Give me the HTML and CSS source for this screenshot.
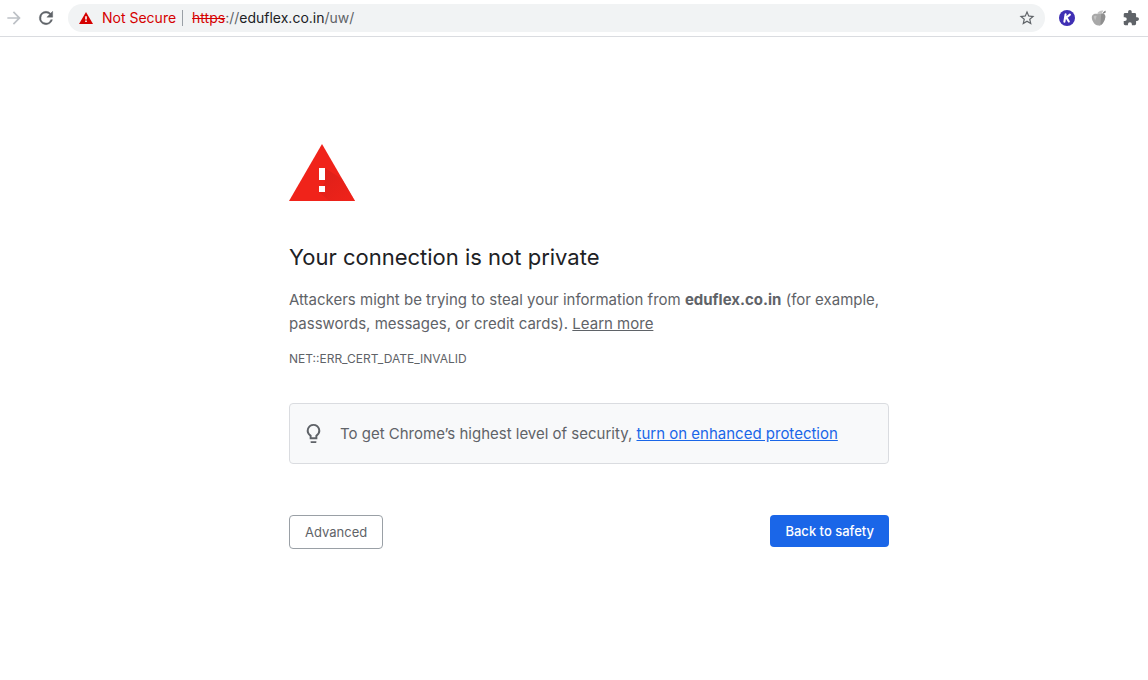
FILE: index.html
```html
<!DOCTYPE html>
<html lang="en">
<head>
  <meta charset="utf-8">
  <title>Privacy error</title>
  <link rel="stylesheet" href="styles.css">
</head>
<body>

  <header class="toolbar">
    <button class="nav-button forward" aria-label="Forward" disabled>
      <svg viewBox="0 0 24 24"><path d="M12 4l-1.41 1.41L16.17 11H4v2h12.17l-5.58 5.59L12 20l8-8z"/></svg>
    </button>
    <button class="nav-button" aria-label="Reload">
      <svg viewBox="0 0 24 24"><path d="M17.65 6.35A7.96 7.96 0 0 0 12 4a8 8 0 1 0 7.73 10h-2.08A6 6 0 1 1 12 6c1.66 0 3.14.69 4.22 1.78L13 11h7V4z" stroke="currentColor" stroke-width=".5"/></svg>
    </button>

    <div class="address-bar">
      <button class="security">
        <svg viewBox="0 0 14 12"><path class="triangle" d="M7 0l7 12H0z"/><path class="mark" d="M6.2 4.200h1.600v3.300H6.200zM6.200 8.600h1.600v1.500H6.200z"/></svg>
        Not Secure
      </button>
      <div class="url"><s>https</s>://<span class="host">eduflex.co.in</span>/uw/</div>
      <button class="star" aria-label="Bookmark this page">
        <svg viewBox="0 0 24 24"><path d="M22 9.24l-7.19-.62L12 2 9.19 8.63 2 9.24l5.46 4.73L5.82 21 12 17.27 18.18 21l-1.63-7.03zM12 15.4l-3.76 2.27 1-4.28-3.32-2.88 4.38-.38L12 6.1l1.71 4.04 4.38.38-3.32 2.88 1 4.28z"/></svg>
      </button>
    </div>

    <div class="extensions">
      <button aria-label="K extension">
        <svg viewBox="0 0 16 16">
          <circle cx="8" cy="8" r="8" fill="#3f2fb4"/>
          <path d="M6.6 4.4L5.4 11.6M10.9 4.6L6.5 8.3M7.6 7.7l2.2 3.8" fill="none" stroke="#fff" stroke-width="2.1" stroke-linecap="round"/>
        </svg>
      </button>
      <button aria-label="Fruit extension">
        <svg viewBox="0 0 16 16">
          <path d="M1 6C2 3.800 4.500 3.600 6.500 4 9 2.800 12.800 2.600 14 5c.9 2.400-.2 5.800-2.100 8.200-1.400 1.900-2.800 2.800-4.400 2.400-2.200-.2-4.400-1.300-5.500-4C1 9.800.5 7.500 1 6z" fill="#a8a8a8"/>
          <path d="M10.200 4c2.200-.8 3.900.1 4.100 2.100.1 2.700-1.200 5.700-3.200 7.800-1.100 1-1.700.7-1.600-.5z" fill="#8f8f8f"/>
          <path d="M6.200 4.200C6.700 1.800 9 .4 12.200.6c-.4 2.400-2.600 3.800-6 3.600z" fill="#c4c4c4"/>
          <path d="M12 2.400L14.300.5l.6 1.700-2.600 1.700z" fill="#808080"/>
          <path d="M2.600 6.700c.8-1.100 2.100-1 3-.5L4.200 10.500z" fill="#c2c2c2"/>
        </svg>
      </button>
      <button aria-label="Extensions">
        <svg viewBox="1 1 22 22"><path d="M20.500 11H19V7a2 2 0 0 0-2-2h-4V3.500a2.500 2.500 0 0 0-5 0V5H4a2 2 0 0 0-1.990 2v3.800H3.500a2.700 2.700 0 0 1 0 5.400H2V20a2 2 0 0 0 2 2h3.800v-1.500a2.700 2.700 0 0 1 5.400 0V22H17a2 2 0 0 0 2-2v-4h1.500a2.500 2.500 0 0 0 0-5z"/></svg>
      </button>
    </div>
  </header>

  <main class="page">
    <div class="interstitial">
      <svg class="warning" viewBox="0 0 66 57">
        <defs>
          <linearGradient id="shade" x1="0" y1="0" x2="1" y2="1">
            <stop offset="0" stop-color="#cf1d18"/>
            <stop offset="1" stop-color="#f0231a"/>
          </linearGradient>
        </defs>
        <path d="M33 0l33 57H0z" fill="#f0231a"/>
        <path d="M36 24l17 11 13 22H40L30 48l6-10z" fill="url(#shade)" opacity=".6"/>
        <path d="M30 24h6v12h-6zM30 42h6v6h-6z" fill="#fff"/>
      </svg>

      <h1>Your connection is not private</h1>
      <p class="message">Attackers might be trying to steal your information from <strong>eduflex.co.in</strong> (for example, passwords, messages, or credit cards). <a href="#">Learn more</a></p>
      <p class="error-code">NET::ERR_CERT_DATE_INVALID</p>

      <div class="promo">
        <svg viewBox="0 0 24 24"><path d="M9 21c0 .55.45 1 1 1h4c.55 0 1-.45 1-1v-1H9zM12 2a7 7 0 0 0-4 12.740V18h8v-3.260A7 7 0 0 0 12 2zm2.850 11.100l-.85.6V16h-4v-2.300l-.85-.6A5 5 0 1 1 17 9a5 5 0 0 1-2.150 4.100z"/></svg>
        <p>To get Chrome’s highest level of security, <a href="#">turn on enhanced protection</a></p>
      </div>

      <div class="actions">
        <button class="secondary">Advanced</button>
        <button class="primary">Back to safety</button>
      </div>
    </div>
  </main>

</body>
</html>
```

FILE: styles.css
```css
* {
  box-sizing: border-box;
}

body {
  margin: 0;
  background: #fff;
  color: #5f6368;
  font-family: Inter, "Liberation Sans", sans-serif;
}

button {
  font-family: inherit;
  cursor: pointer;
}

svg {
  display: block;
  fill: currentColor;
}

/* browser toolbar */
.toolbar {
  display: flex;
  align-items: center;
  gap: 12px;
  padding: 4px 9px 4px 4px;
  border-bottom: 1px solid #dadce0;
}

.toolbar button {
  padding: 0;
  border: none;
  background: none;
  color: #5f6368;
}

.nav-button svg {
  width: 20px;
  height: 20px;
}

.toolbar .forward {
  color: #bdc1c6;
}

.address-bar {
  flex: 1;
  display: flex;
  align-items: center;
  height: 28px;
  padding: 0 9px 0 11px;
  border-radius: 14px;
  background: #f1f3f4;
  font-size: 14px;
  line-height: 16px;
}

.toolbar .security {
  display: flex;
  align-items: center;
  gap: 9px;
  padding-right: 6px;
  border-right: 1px solid #9aa0a6;
  color: #d50000;
  font-size: 14px;
  line-height: 16px;
}

.security svg {
  width: 14px;
  height: 12px;
}

.security .mark {
  fill: #fff;
}

.url {
  flex: 1;
  padding-left: 9px;
}

.url s {
  color: #d50000;
}

.host {
  color: #202124;
}

.star svg {
  width: 18px;
  height: 18px;
}

.extensions {
  display: flex;
  gap: 16px;
  padding-left: 2px;
}

.extensions svg {
  width: 16px;
  height: 16px;
}

/* warning page */
.page {
  padding: 107px 0 40px 30px;
}

.interstitial {
  max-width: 600px;
  margin: 0 auto;
}

.warning {
  width: 66px;
  height: 57px;
}

h1 {
  margin: 40px 0 15px;
  color: #202124;
  font-size: 22px;
  font-weight: 400;
  line-height: 32px;
}

.message {
  margin: 0;
  font-size: 15px;
  line-height: 24px;
}

.message a {
  color: inherit;
}

.error-code {
  margin: 12px 0 34px;
  font-size: 12px;
  line-height: 21px;
}

.promo {
  display: flex;
  align-items: center;
  gap: 15px;
  padding: 18px 12px;
  border: 1px solid #dadce0;
  border-radius: 4px;
  background: #f8f9fa;
}

.promo svg {
  width: 23px;
  height: 23px;
}

.promo p {
  margin: 0;
  font-size: 15px;
  line-height: 23px;
}

.promo a {
  color: #1a66e8;
}

.actions {
  display: flex;
  justify-content: space-between;
  align-items: flex-start;
  margin-top: 51px;
}

.actions button {
  padding: 8px 15px;
  border: none;
  border-radius: 4px;
  font-size: 13px;
  line-height: 16px;
}

.actions .secondary {
  border: 1px solid #9aa0a6;
  background: #fff;
  color: #5f6368;
}

.actions .primary {
  background: #1a66e8;
  color: #fff;
  font-weight: 500;
}
```
